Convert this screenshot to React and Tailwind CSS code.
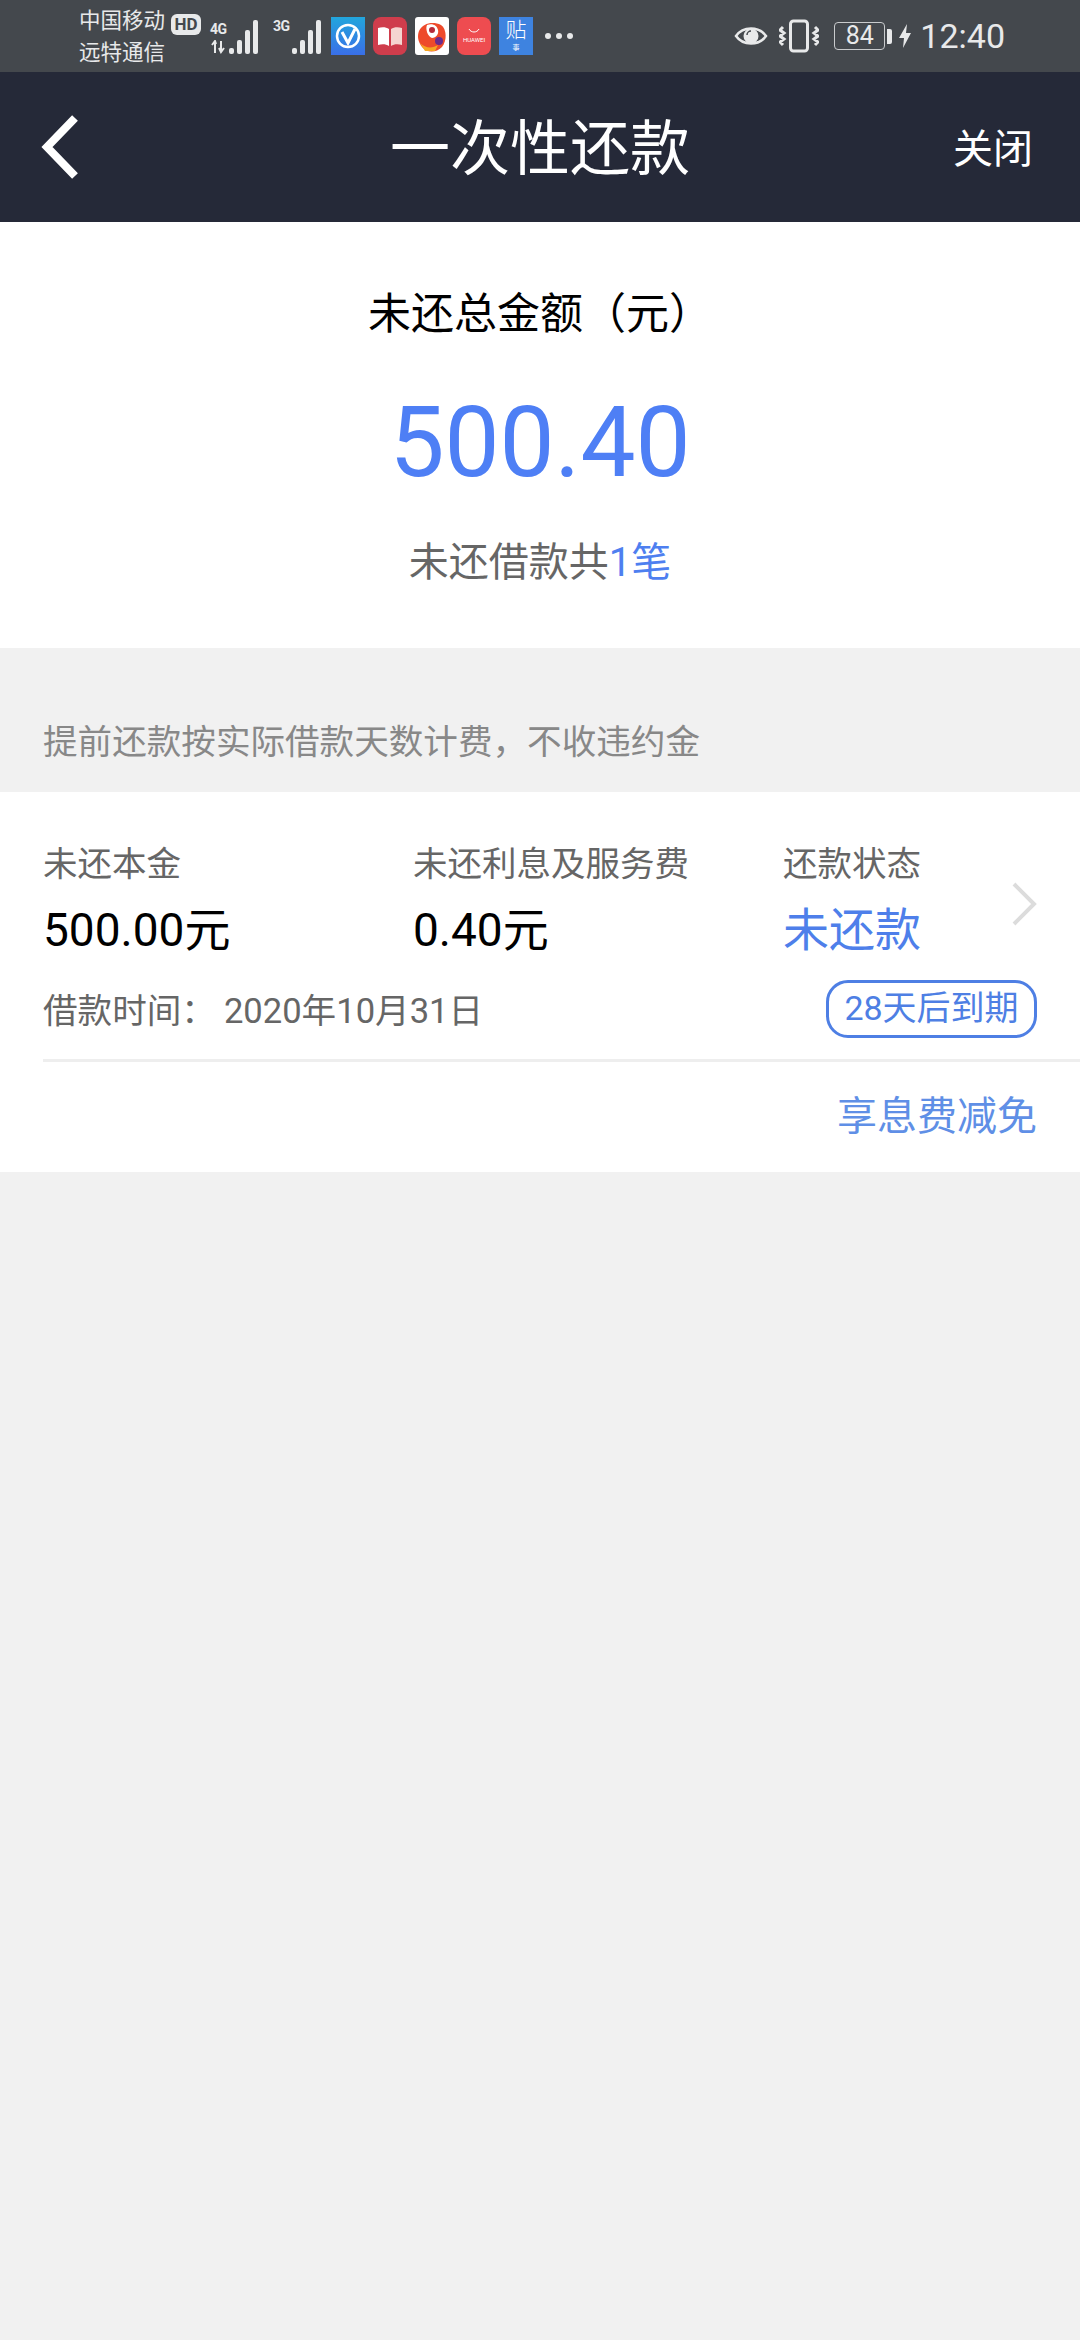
import React from "react";

const FONT = "font-['Roboto','Noto_Sans_CJK_SC',sans-serif]";

// signal bars, heights go up left to right
const Bars = ({ heights }) => (
  <div className="flex items-end gap-[3px] h-[34px]">
    {heights.map((h, i) => (
      <div key={i} className="w-[5px] rounded-[2px] bg-[#e8e9ea]" style={{ height: h }} />
    ))}
  </div>
);

const AppIcons = () => (
  <div className="flex items-center gap-[8px] ml-[10px]">
    {/* V */}
    <svg width="34" height="38" viewBox="0 0 34 38">
      <defs>
        <linearGradient id="vblue" x1="0" y1="0" x2="0" y2="1">
          <stop offset="0" stopColor="#22a6dc" />
          <stop offset="1" stopColor="#3a6fe8" />
        </linearGradient>
      </defs>
      <rect width="34" height="38" fill="url(#vblue)" />
      <circle cx="17" cy="19" r="11" fill="none" stroke="#fff" strokeWidth="2.5" />
      <path d="M11 15l6 11 7-14" fill="none" stroke="#fff" strokeWidth="3" />
    </svg>
    {/* book */}
    <svg width="34" height="38" viewBox="0 0 34 38">
      <rect width="34" height="38" rx="8" fill="#cf3d4c" />
      <path d="M5 11c4-1 8-1 11 1v17c-3-2-7-2-11-1z" fill="#fff" />
      <path d="M18 12c3-2 7-2 11-1v17c-4-1-8-1-11 1z" fill="#f5d5d0" />
    </svg>
    {/* bird */}
    <svg width="34" height="38" viewBox="0 0 34 38">
      <rect width="34" height="38" rx="3" fill="#fff" />
      <path d="M4 14C8 6 18 4 26 8c6 4 6 16 1 22-6 6-15 6-20 0-4-5-5-11-3-16z" fill="#ee4a2b" />
      <path d="M12 8c5-2 10 0 11 5 1 4-2 8-6 8-4-1-7-9-5-13z" fill="#fff" />
      <circle cx="17" cy="13" r="3" fill="#b52a3a" />
      <circle cx="24" cy="24" r="4" fill="#6a2a8c" />
      <path d="M5 26c5 5 12 6 18 2l-3 6H10z" fill="#f5a623" />
    </svg>
    {/* huawei */}
    <div className="w-[34px] h-[38px] rounded-[8px] bg-[#ee4c50] flex flex-col items-center justify-center">
      <svg width="12" height="6" viewBox="0 0 12 6" className="mb-[2px]">
        <path d="M1 1c2 4 8 4 10 0" fill="none" stroke="#fff" strokeWidth="1" />
      </svg>
      <span className="text-[6px] leading-[8px] text-white">HUAWEI</span>
    </div>
    {/* tie */}
    <div className="w-[34px] h-[38px] bg-[#3e83e0] flex flex-col items-center text-white">
      <span className="text-[21px] leading-[27px] font-light">贴</span>
      <span className="text-[7px] leading-[8px]">事</span>
    </div>
  </div>
);

const StatusBar = () => (
  <div className="h-[72px] bg-[#44484d] flex items-center justify-between pl-[79px] pr-[75px] text-[#e8e9ea]">
    <div className="flex items-center">
      <div className="w-[88px] text-[21.5px] leading-[32px] pt-[2px]">
        <div>中国移动</div>
        <div>远特通信</div>
      </div>
      <div className="self-start mt-[11px] ml-[4px] w-[30px] h-[21px] rounded-[6px] bg-[#e8e9ea] text-[#44484d] text-[17px] leading-[21px] font-bold text-center">
        HD
      </div>
      <div className="flex items-end ml-[9px] h-[36px]">
        <div className="w-[19px] flex flex-col">
          <span className="text-[14px] leading-[16px] font-bold tracking-[-0.5px]">4G</span>
          <svg width="18" height="14" viewBox="0 0 18 14" className="mt-[3px]">
            <path d="M5 13V2M2 5l3-4 1 3M11 1v9M9 8l2 4 3-4" fill="none" stroke="#e8e9ea" strokeWidth="2" />
          </svg>
        </div>
        <Bars heights={[6, 14, 24, 34]} />
      </div>
      <div className="flex items-end ml-[15px] h-[36px]">
        <div className="w-[19px] self-start text-[14px] leading-[16px] font-bold tracking-[-0.5px]">3G</div>
        <Bars heights={[6, 14, 24, 34]} />
      </div>
      <AppIcons />
      <div className="flex gap-[5px] ml-[12px]">
        <div className="w-[6px] h-[6px] rounded-full bg-[#e8e9ea]" />
        <div className="w-[6px] h-[6px] rounded-full bg-[#e8e9ea]" />
        <div className="w-[6px] h-[6px] rounded-full bg-[#e8e9ea]" />
      </div>
    </div>
    <div className="flex items-center">
      <svg width="34" height="26" viewBox="0 0 34 26">
        <path d="M2 13C9 3 25 3 32 13 25 23 9 23 2 13z" fill="none" stroke="#e8e9ea" strokeWidth="2.5" />
        <circle cx="17" cy="13" r="7.5" fill="#e8e9ea" />
        <path d="M13 12a4 4 0 0 1 4-4" fill="none" stroke="#44484d" strokeWidth="1.5" />
      </svg>
      <svg width="40" height="34" viewBox="0 0 40 34" className="ml-[11px]">
        <rect x="11.5" y="2" width="17" height="30" rx="3" fill="none" stroke="#e8e9ea" strokeWidth="3" />
        <path d="M4 8l-3 3 4 3-4 3 4 3-4 3 3 3M36 8l3 3-4 3 4 3-4 3 4 3-3 3" fill="none" stroke="#e8e9ea" strokeWidth="3" />
      </svg>
      <div className="ml-[15px] w-[51px] h-[28px] rounded-[4px] border border-[#c9cbcd] text-[25px] leading-[26px] text-center">
        84
      </div>
      <div className="ml-[2px] w-[5px] h-[15px] bg-[#e8e9ea] rounded-r-[2px]" />
      <svg width="12" height="24" viewBox="0 0 12 24" className="ml-[7px]">
        <path d="M8 0L0 14h5l-1 10 8-15H7z" fill="#e8e9ea" />
      </svg>
      <span className="ml-[9px] text-[34px] leading-[40px]">12:40</span>
    </div>
  </div>
);

const Header = () => (
  <div className="h-[150px] bg-[#252938] flex items-center px-[40px] text-white">
    <div className="flex-1">
      <svg width="42" height="66" viewBox="0 0 42 66">
        <path d="M35 4L7 33l28 29" fill="none" stroke="#fff" strokeWidth="8" />
      </svg>
    </div>
    <h1 className="text-[60px] font-normal mt-[6px]">一次性还款</h1>
    <div className="flex-1 text-right">
      <span className="text-[40px] mt-[6px] mr-[7px] inline-block">关闭</span>
    </div>
  </div>
);

const Summary = () => (
  <div className="h-[426px] bg-white flex flex-col items-center pt-[63px]">
    <div className="text-[43px] leading-[58px] text-black">未还总金额（元）</div>
    <div className="mt-[44px] text-[98px] leading-[112px] text-[#4e7ff5]">500.40</div>
    <div className="mt-[36px] text-[40px] leading-[56px] text-[#666]">
      未还借款共<span className="text-[#4e7ff0]">1笔</span>
    </div>
  </div>
);

const LoanCard = () => (
  <div className="h-[380px] bg-white pl-[43px] flex flex-col">
    <div className="pr-[43px] pt-[48px] flex items-start">
      <div className="w-[370px]">
        <div className="text-[34.5px] leading-[48px] text-[#666]">未还本金</div>
        <div className="mt-[10px] text-[46px] leading-[64px] text-black">500.00元</div>
      </div>
      <div className="w-[370px]">
        <div className="text-[34.5px] leading-[48px] text-[#666]">未还利息及服务费</div>
        <div className="mt-[10px] text-[46px] leading-[64px] text-black">0.40元</div>
      </div>
      <div className="flex-1">
        <div className="text-[34.5px] leading-[48px] text-[#666]">还款状态</div>
        <div className="mt-[10px] text-[46px] leading-[64px] text-[#4e7fea]">未还款</div>
      </div>
      <svg width="26" height="44" viewBox="0 0 26 44" className="mt-[42px]">
        <path d="M3 2l20 20L3 42" fill="none" stroke="#dcdcdc" strokeWidth="4" />
      </svg>
    </div>
    <div className="pr-[43px] mt-[18px] flex items-center justify-between">
      <div className="pt-[3px] text-[34.6px] leading-[48px] text-[#666]">
        借款时间：<span className="ml-[8px]">2020年10月31日</span>
      </div>
      <div className="w-[211px] h-[58px] rounded-[22px] border-[3px] border-[#4e7fe4] text-[34px] leading-[50px] text-[#4e7fe4] text-center">
        28天后到期
      </div>
    </div>
    <div className="mt-[21px] h-[3px] bg-[#eee]" />
    <div className="pr-[43px] mt-[27px] text-right text-[40px] leading-[56px] text-[#5f8fe6]">享息费减免</div>
  </div>
);

export default function App() {
  return (
    <div className={`${FONT} w-[1080px] h-[2340px] bg-[#f1f1f1] overflow-hidden`}>
      <StatusBar />
      <Header />
      <Summary />
      <div className="h-[144px] flex items-end pl-[43px] pb-[26px] text-[34.6px] leading-[48px] text-[#888]">
        提前还款按实际借款天数计费，不收违约金
      </div>
      <LoanCard />
    </div>
  );
}
